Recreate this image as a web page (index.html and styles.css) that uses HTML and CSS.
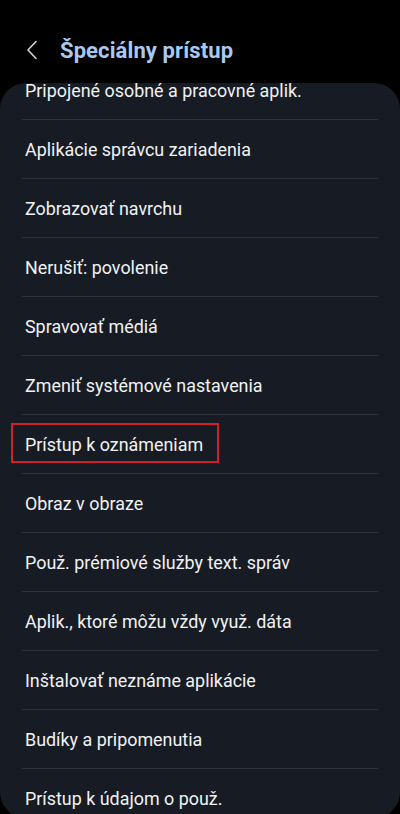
FILE: index.html
```html
<!DOCTYPE html>
<html lang="sk">
<head>
<meta charset="utf-8">
<title>Špeciálny prístup</title>
<link rel="stylesheet" href="styles.css">
</head>
<body>
<div class="screen">
  <header class="appbar">
    <svg class="back" width="14" height="20" viewBox="0 0 14 20" aria-hidden="true">
      <path d="M11 1.5 L3 10 L11 18.5" fill="none" stroke="#d2d4d8" stroke-width="1.6" stroke-linecap="round" stroke-linejoin="round"/>
    </svg>
    <h1 class="title">Špeciálny prístup</h1>
  </header>
  <main class="card">
    <ul class="list">
      <li class="row">Pripojené osobné a pracovné aplik.</li>
      <li class="row">Aplikácie správcu zariadenia</li>
      <li class="row">Zobrazovať navrchu</li>
      <li class="row">Nerušiť: povolenie</li>
      <li class="row">Spravovať médiá</li>
      <li class="row">Zmeniť systémové nastavenia</li>
      <li class="row row-marked">Prístup k oznámeniam<span class="mark"></span></li>
      <li class="row">Obraz v obraze</li>
      <li class="row">Použ. prémiové služby text. správ</li>
      <li class="row">Aplik., ktoré môžu vždy využ. dáta</li>
      <li class="row">Inštalovať neznáme aplikácie</li>
      <li class="row">Budíky a pripomenutia</li>
      <li class="row">Prístup k údajom o použ.</li>
    </ul>
  </main>
</div>
</body>
</html>
```
FILE: styles.css
```css
html, body {
  margin: 0;
  padding: 0;
  background: #000;
}
body {
  width: 400px;
  height: 814px;
  overflow: hidden;
  font-family: Roboto, "Noto Sans", sans-serif;
  color: #f1f2f4;
}
.screen {
  display: flex;
  flex-direction: column;
  height: 814px;
}
.appbar {
  flex: none;
  height: 83px;
  display: flex;
  align-items: center;
  padding: 17px 0 0 25px;
  box-sizing: border-box;
}
.back {
  flex: none;
  display: block;
}
.title {
  margin: 0 0 0 21px;
  font-size: 22px;
  font-weight: 700;
  color: #a9c8f0;
  letter-spacing: 0.1px;
}
.card {
  height: 735px;
  flex: none;
  background: #171c24;
  border-radius: 26px;
  overflow: hidden;
}
.list {
  list-style: none;
  margin: -22px 0 0 0;
  padding: 0;
}
.row {
  position: relative;
  height: 58px;
  margin: 0 22px;
  padding: 0 3px;
  display: flex;
  align-items: center;
  font-size: 17.9px;
  border-bottom: 1px solid #2e343c;
}
.row:last-child {
  border-bottom: none;
}
.mark {
  position: absolute;
  left: -11px;
  top: 8px;
  width: 208px;
  height: 40px;
  box-sizing: border-box;
  border: 2px solid #d0202a;
}
```
